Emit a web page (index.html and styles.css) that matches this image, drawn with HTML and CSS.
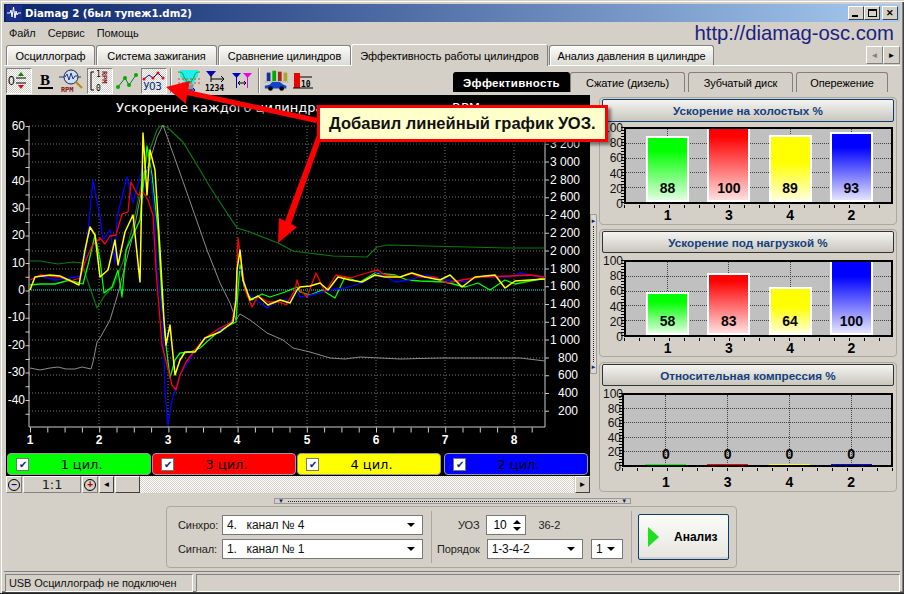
FILE: index.html
```html
<!DOCTYPE html>
<html lang="ru">
<head>
<meta charset="utf-8">
<title>Diamag 2</title>
<link rel="stylesheet" href="styles.css">
</head>
<body>
<div class="window">
  <header class="titlebar">
    <svg class="app-icon" width="16" height="16" viewBox="0 0 16 16"><rect width="16" height="16" fill="#1a2f8a"/><path d="M1 8h3l1-3 1 7 1.500-10 1.500 11 1-7 1 4 1-2h3" fill="none" stroke="#fff"/></svg>
    <span class="title-text">Diamag 2 (был тупеж1.dm2)</span>
    <span class="caption-buttons">
      <span class="cap-btn"><i class="cap-min"></i></span>
      <span class="cap-btn"><i class="cap-max"></i></span>
      <span class="cap-btn cap-close">✕</span>
    </span>
  </header>
  <div class="menubar">
    <nav class="menu"><span>Файл</span><span>Сервис</span><span>Помощь</span></nav>
    <span class="url">http://diamag-osc.com</span>
  </div>
  <div class="tabs">
    <span class="tab t1">Осциллограф</span>
    <span class="tab t2">Система зажигания</span>
    <span class="tab t3">Сравнение цилиндров</span>
    <span class="tab active t4">Эффективность работы цилиндров</span>
    <span class="tab t5">Анализ давления в цилиндре</span>
    <span class="tab-arrows"><span class="tab-arrow dim">◄</span><span class="tab-arrow">►</span></span>
  </div>
  <div class="toolstrip">
    <div class="toolbar">
      <span class="tool pressed"><svg width="22" height="20" viewBox="0 0 22 20"><text x="0" y="14" class="ic-t">0</text><path d="M8 7h10M8 12h10" stroke="#000"/><path d="M13 1l3 4h-6z" fill="#080"/><path d="M13 18l3-4h-6z" fill="#e00"/></svg></span>
      <span class="tool t-b"><svg width="22" height="20" viewBox="0 0 22 20"><text x="5" y="14" class="ic-b">B</text><path d="M3 17h15" stroke="#000" stroke-width="2"/></svg></span>
      <span class="tool t-s"><svg width="26" height="24" viewBox="0 0 26 24"><circle cx="12" cy="8" r="7" fill="#cfe0f5" stroke="#223" /><path d="M6 8l2-3 2 6 2-7 2 6 2-3h2M0 8h5M19 8h3" fill="none" stroke="#238"/><path d="M17 13l6 6" stroke="#b80" stroke-width="2"/><text x="2" y="23" class="ic-rpm">RPM</text></svg></span>
      <span class="sep-s"></span>
      <span class="tool pressed t-r"><svg width="22" height="24" viewBox="0 0 22 24"><path d="M5 3h-3v18h3" fill="none" stroke="#000"/><text x="7" y="8" class="ic-s">1</text><text x="7" y="22" class="ic-s">0</text><text class="ic-rpm" transform="rotate(90 13 2)" x="13" y="2">RPM</text></svg></span>
      <span class="tool t-l"><svg width="24" height="20" viewBox="0 0 24 20"><path d="M3 16l7-9 4 7 7-10" fill="none" stroke="#173"/><g fill="#0a0"><circle cx="3" cy="16" r="2"/><circle cx="10" cy="7" r="2"/><circle cx="14" cy="14" r="2"/><circle cx="21" cy="4" r="2"/></g></svg></span>
      <span class="tool pressed t-u"><svg width="24" height="22" viewBox="0 0 24 22"><path d="M2 9l5-4 4 3 5-5 5 5" fill="none" stroke="#00a"/><g fill="#e00"><circle cx="2" cy="9" r="1.500"/><circle cx="11" cy="8" r="1.500"/><circle cx="16" cy="3" r="1.500"/><circle cx="21" cy="8" r="1.500"/></g><text x="1" y="20" class="ic-u">УОЗ</text></svg></span>
      <span class="sep"></span>
      <span class="tool t-a"><svg width="24" height="24" viewBox="0 0 24 24"><path d="M3 1h18v6l-6 9h-6l-6-9z" fill="#2ee"/><path d="M1 3c4 0 5 1 6 5l3 5h4l3-5c1-4 2-5 6-5" fill="none" stroke="#0a0"/><path d="M1 10h22M1 14h22" stroke="#e33" stroke-dasharray="2 2"/><path d="M6 21h12M6 21l2-2M6 21l2 2M18 21l-2-2M18 21l-2 2" stroke="#00a" fill="none"/></svg></span>
      <span class="tool t-n"><svg width="26" height="24" viewBox="0 0 26 24"><path d="M4 2h10l-5 6z" fill="#00c"/><path d="M9 4v9M9 10h13M22 10l-3-3M22 10l-3 3" stroke="#000" fill="none"/><text x="3" y="22" class="ic-n">1234</text></svg></span>
      <span class="tool t-m"><svg width="24" height="22" viewBox="0 0 24 22"><path d="M2 3h9l-4.500 5z" fill="#00c"/><path d="M13 3h9l-4.500 5z" fill="#e0e"/><path d="M6.500 5v13" stroke="#00c"/><path d="M17.500 5v13" stroke="#e0e"/><path d="M8 13h8M8 13l2-2M8 13l2 2M16 13l-2-2M16 13l-2 2" stroke="#000" fill="none"/></svg></span>
      <span class="sep sep2"></span>
      <span class="tool t-c"><svg width="28" height="24" viewBox="0 0 30 24"><rect x="4" y="3" width="4" height="9" fill="#139"/><rect x="10" y="1" width="4" height="11" fill="#0a0"/><rect x="16" y="2" width="4" height="10" fill="#a22"/><rect x="22" y="3" width="4" height="9" fill="#aa2"/><path d="M2 13h26" stroke="#888" stroke-dasharray="1 1"/><path d="M2 20v-3l5-1 3-3h8l4 3 3 1v3z" fill="#14c"/><circle cx="8" cy="20" r="2.500"/><circle cx="20" cy="20" r="2.500"/></svg></span>
      <span class="tool t-d"><svg width="24" height="22" viewBox="0 0 24 22"><rect x="3" y="3" width="6" height="15" fill="#e00"/><path d="M9 7h12" stroke="#000"/><text x="10" y="17" class="ic-n">10</text><path d="M2 18h20" stroke="#000"/></svg></span>
    </div>
    <div class="subtabs">
      <span class="subtab on s1">Эффективность</span>
      <span class="subtab s2">Сжатие (дизель)</span>
      <span class="subtab s3">Зубчатый диск</span>
      <span class="subtab s4">Опережение</span>
    </div>
  </div>

  <div class="main">
    <section class="scope">
      <svg class="scope-chart" width="584" height="358" viewBox="6 95 584 358">
        <rect x="6" y="95" width="584" height="358" fill="#000"/>
        <g class="grid">
          <path d="M29 126H545M29 144H545M29 162H545M29 180H545M29 197H545M29 215H545M29 233H545M29 251H545M29 269H545M29 304H545M29 322H545M29 340H545M29 358H545M29 375H545M29 393H545M29 411H545"/>
          <path d="M99 126V427M168 126V427M237 126V427M307 126V427M376 126V427M445 126V427M514 126V427"/>
        </g>
        <path class="axis" d="M29 126V427H545V126"/>
        <line class="ticks" x1="30" y1="430" x2="545" y2="430" stroke-dasharray="1 16.300"/>
        <line class="ticks-v" x1="27.500" y1="126" x2="27.500" y2="427" stroke-dasharray="1 12.700"/>
        <line class="ticks-v" x1="547" y1="126" x2="547" y2="427" stroke-dasharray="1 16.800"/>
        <line class="zero" x1="29" y1="290" x2="545" y2="290"/>
        <polyline class="c-dg" points="30,261 40,261 58,264 73,262 82,263 90,288 97,308 105,295 113,287 123,262 133,225 147,157 157,130 160,126 167,127 183,142 200,170 210,187 237,228 250,232 278,243 293,251 300,252 333,256 367,257 377,247 387,245 467,247 507,248 545,248"/>
        <polyline class="c-gr" points="30,368 40,370 50,368 58,367 66,369 75,369 82,367 91,369 93,362 97,342 100,338 110,320 117,297 125,266 133,235 143,183 157,137 163,125 170,145 180,173 193,210 207,250 220,283 230,303 236,320 240,314 250,320 258,326 267,333 283,340 293,348 310,352 330,358 345,359 360,357 400,359 440,358 480,358 520,358 545,361"/>
        <polyline class="c-g" points="30,285 40,284 55,284 70,280 83,284 88,265 95,235 100,260 104,293 112,287 118,270 122,297 126,250 133,235 140,220 147,146 152,175 158,230 162,300 166,345 170,378 175,360 180,353 190,352 200,348 220,330 236,322 238,290 240,265 245,290 252,300 262,294 270,297 285,292 297,287 300,292 310,295 322,290 335,298 345,277 360,282 375,273 395,275 407,280 420,281 445,282 465,287 478,283 490,290 505,280 515,284 545,278"/>
        <polyline class="c-b" points="30,280 40,276 55,280 70,278 80,276 85,262 93,180 100,217 103,240 110,230 115,263 117,217 127,177 133,203 140,177 142,170 150,168 155,220 157,270 163,320 165,393 168,425 172,400 180,375 185,367 200,343 217,332 233,320 235,300 238,270 242,270 247,293 267,308 280,300 290,300 297,290 300,297 308,296 330,290 345,288 365,282 378,272 395,282 410,280 425,275 445,280 465,282 478,277 495,277 510,277 520,273 545,278"/>
        <polyline class="c-r" points="30,280 40,275 50,276 60,277 70,281 80,278 85,262 92,246 100,238 105,244 110,236 116,235 122,214 128,212 131,182 135,190 138,195 143,192 148,200 153,215 156,270 160,320 162,345 167,365 172,385 176,390 180,375 186,362 195,350 205,338 220,328 232,322 236,300 238,238 241,260 245,290 252,307 258,296 268,302 280,302 286,305 295,290 297,280 300,290 307,297 316,273 325,292 336,275 350,278 360,275 370,272 378,270 385,275 400,277 410,273 420,277 435,277 447,283 462,280 480,277 510,276 530,275 545,277"/>
        <polyline class="c-y" points="30,290 35,277 50,275 60,276 75,283 79,285 85,250 90,227 95,235 100,277 108,270 115,240 118,265 125,232 133,215 140,282 143,133 147,195 150,150 155,170 160,250 164,320 166,345 170,325 175,375 180,360 185,352 195,352 205,338 220,332 233,322 236,300 237,270 240,250 243,280 250,300 258,296 268,305 280,300 290,303 297,290 300,287 310,286 320,283 328,290 338,277 350,280 362,282 375,275 385,277 400,277 412,273 425,277 440,280 450,275 462,287 475,277 495,275 505,288 515,281 545,279"/>
        <text class="sc-title" x="116" y="112">Ускорение каждого цилиндра</text>
        <text class="sc-title" x="452" y="112">RPM</text>
        <g class="sc-l" text-anchor="end">
          <text x="25" y="130">60</text><text x="25" y="157">50</text><text x="25" y="185">40</text><text x="25" y="212">30</text><text x="25" y="239">20</text><text x="25" y="267">10</text><text x="25" y="294">0</text><text x="25" y="321">-10</text><text x="25" y="349">-20</text><text x="25" y="376">-30</text><text x="25" y="404">-40</text>
        </g>
        <g class="sc-l">
          <text x="550" y="148">3 200</text><text x="550" y="166">3 000</text><text x="550" y="184">2 800</text><text x="550" y="201">2 600</text><text x="550" y="219">2 400</text><text x="550" y="237">2 200</text><text x="550" y="255">2 000</text><text x="550" y="273">1 800</text><text x="550" y="290">1 600</text><text x="550" y="308">1 400</text><text x="550" y="326">1 200</text><text x="550" y="344">1 000</text><text x="558" y="362">800</text><text x="558" y="379">600</text><text x="558" y="397">400</text><text x="558" y="415">200</text>
        </g>
        <g class="sc-x" text-anchor="middle">
          <text x="30" y="444">1</text><text x="99" y="444">2</text><text x="168" y="444">3</text><text x="237" y="444">4</text><text x="307" y="444">5</text><text x="376" y="444">6</text><text x="445" y="444">7</text><text x="514" y="444">8</text>
        </g>
      </svg>
      <div class="cyls">
        <label class="cyl green"><span class="check">✔</span><span class="cyl-name">1 цил.</span></label>
        <label class="cyl red"><span class="check">✔</span><span class="cyl-name">3 цил.</span></label>
        <label class="cyl yellow"><span class="check">✔</span><span class="cyl-name">4 цил.</span></label>
        <label class="cyl blue"><span class="check">✔</span><span class="cyl-name">2 цил.</span></label>
      </div>
      <div class="scrollrow">
        <span class="zoom-btn"><i class="zm">–</i></span>
        <span class="scale">1:1</span>
        <span class="zoom-btn"><i class="zm zr">+</i></span>
        <span class="sb-btn">◄</span>
        <span class="sb-thumb"></span>
        <span class="sb-track"></span>
        <span class="sb-btn">►</span>
      </div>
    </section>

    <div class="vsplit"><span class="sp-arrow">►</span><span class="sp-dots"></span><span class="sp-arrow">►</span></div>

    <aside class="groups">
      <section class="group g1">
        <div class="group-head focus">Ускорение на холостых %</div>
        <div class="bar-chart">
          <div class="y-labels"><span>100</span><span>80</span><span>60</span><span>40</span><span>20</span><span>0</span></div>
          <div class="bar-main">
            <div class="plot">
              <div class="gl gl-h"><i></i><i></i><i></i><i></i></div>
              <div class="gl gl-v"><i></i><i></i><i></i><i></i></div>
              <div class="bars">
                <div class="slot"><div class="bar green" style="height:88%"></div><b>88</b></div>
                <div class="slot"><div class="bar red" style="height:100%"></div><b>100</b></div>
                <div class="slot"><div class="bar yellow" style="height:89%"></div><b>89</b></div>
                <div class="slot"><div class="bar blue" style="height:93%"></div><b>93</b></div>
              </div>
            </div>
            <div class="cats"><span>1</span><span>3</span><span>4</span><span>2</span></div>
          </div>
        </div>
      </section>
      <section class="group g2">
        <div class="group-head">Ускорение под нагрузкой %</div>
        <div class="bar-chart">
          <div class="y-labels"><span>100</span><span>80</span><span>60</span><span>40</span><span>20</span><span>0</span></div>
          <div class="bar-main">
            <div class="plot">
              <div class="gl gl-h"><i></i><i></i><i></i><i></i></div>
              <div class="gl gl-v"><i></i><i></i><i></i><i></i></div>
              <div class="bars">
                <div class="slot"><div class="bar green" style="height:58%"></div><b>58</b></div>
                <div class="slot"><div class="bar red" style="height:83%"></div><b>83</b></div>
                <div class="slot"><div class="bar yellow" style="height:64%"></div><b>64</b></div>
                <div class="slot"><div class="bar blue" style="height:100%"></div><b>100</b></div>
              </div>
            </div>
            <div class="cats"><span>1</span><span>3</span><span>4</span><span>2</span></div>
          </div>
        </div>
      </section>
      <section class="group g3">
        <div class="group-head">Относительная компрессия %</div>
        <div class="bar-chart wide">
          <div class="y-labels"><span>100</span><span>80</span><span>60</span><span>40</span><span>20</span><span>0</span></div>
          <div class="bar-main">
            <div class="plot">
              <div class="gl gl-h"><i></i><i></i><i></i><i></i></div>
              <div class="gl gl-v"><i></i><i></i><i></i><i></i></div>
              <div class="bars">
                <div class="slot"><div class="line green"></div><b>0</b></div>
                <div class="slot"><div class="line red"></div><b>0</b></div>
                <div class="slot"><div class="line yellow"></div><b>0</b></div>
                <div class="slot"><div class="line blue"></div><b>0</b></div>
              </div>
            </div>
            <div class="cats"><span>1</span><span>3</span><span>4</span><span>2</span></div>
          </div>
        </div>
      </section>
    </aside>
  </div>

  <div class="hsplit"><span class="sp-arrow">▼</span><span class="sp-dots-h"></span><span class="sp-arrow">▼</span></div>

  <div class="bottom">
    <div class="controls">
      <div class="ctl-col c1">
        <div class="row"><span class="lbl">Синхро:</span><span class="combo w201"><span>4.&nbsp;&nbsp; канал № 4</span><i class="dd"></i></span></div>
        <div class="row"><span class="lbl">Сигнал:</span><span class="combo w201"><span>1.&nbsp;&nbsp; канал № 1</span><i class="dd"></i></span></div>
      </div>
      <span class="vline"></span>
      <div class="ctl-col c2">
        <div class="row r-uoz"><span class="lbl">УОЗ</span><span class="spin"><span>10</span><span class="spin-arrows"><i class="up"></i><i class="down"></i></span></span><span class="lbl teeth">36-2</span></div>
        <div class="row"><span class="lbl">Порядок</span><span class="combo w97"><span>1-3-4-2</span><i class="dd"></i></span><span class="combo w32"><span>1</span><i class="dd"></i></span></div>
      </div>
      <span class="vline"></span>
      <button class="run"><i class="play"></i><span>Анализ</span></button>
    </div>
  </div>

  <footer class="status">
    <span class="st-panel st1">USB Осциллограф не подключен</span>
    <span class="st-panel st2"></span>
  </footer>

  <svg class="arrows" width="904" height="594" viewBox="0 0 904 594">
    <path class="arrow-shadow" d="M170 91L194 84L192 93L322 122L320 127L190 99L190 107Z"/>
    <path class="arrow" d="M166 87L190 81L188 90L318 118L316 123L187 95L186 104Z"/>
    <path class="arrow" d="M278 243L279 218L285 221L317 135L322 137L291 224L297 227Z"/>
  </svg>
  <div class="note">Добавил линейный график УОЗ.</div>
</div>
</body>
</html>
```
FILE: styles.css
```css
* { box-sizing: border-box; }
html, body { margin: 0; padding: 0; }
body { width: 904px; height: 594px; overflow: hidden; background: #d4d0c8; font: 11px "Liberation Sans", Arial, sans-serif; letter-spacing: -.1px; color: #000; }
i { font-style: normal; }

.window { position: relative; width: 904px; height: 594px; padding: 4px 4px 0; background: #d4d0c8; display: flex; flex-direction: column; box-shadow: inset 1px 1px 0 #d4d0c8, inset 2px 2px 0 #fff, inset -1px -1px 0 #404040, inset -2px -2px 0 #808080; border-bottom: 1px solid #222; }

/* title */
.titlebar { height: 18px; flex: none; display: flex; align-items: center; background: linear-gradient(90deg, #0a246a, #a6caf0); padding: 0 2px; }
.app-icon { flex: none; }
.title-text { margin-left: 3px; color: #fff; letter-spacing: 0; font: bold 10.200px "DejaVu Sans", sans-serif; }
.caption-buttons { margin-left: auto; display: flex; }
.cap-btn { width: 16px; height: 14px; background: #d4d0c8; border: 1px solid; border-color: #fff #404040 #404040 #fff; display: flex; align-items: center; justify-content: center; font-size: 9px; font-weight: bold; position: relative; }
.cap-min { width: 6px; height: 2px; background: #000; margin-top: 6px; margin-right: 2px; }
.cap-max { width: 9px; height: 8px; border: 1px solid #000; border-top-width: 2px; }
.cap-close { margin-left: 2px; }

/* menu */
.menubar { height: 22px; flex: none; display: flex; justify-content: space-between; align-items: center; padding: 0 4px 0 5px; }
.menu { display: flex; gap: 12px; color: #111; }
.url { font: 20.300px "Liberation Sans", sans-serif; letter-spacing: 0; color: #1b2280; margin-top: 1px; margin-right: 2px; }

/* tabs */
.tabs { height: 22px; flex: none; display: flex; align-items: flex-end; padding-left: 2px; border-bottom: 1px solid #fff; position: relative; }
.tab { height: 20px; margin-right: 1px; display: flex; align-items: center; justify-content: center; border: 1px solid #808080; border-bottom: 0; border-radius: 3px 3px 0 0; background: linear-gradient(#fbfbf9, #dcdad4); box-shadow: inset 1px 1px 0 #fff; }
.t1 { width: 89px; } .t2 { width: 121px; } .t3 { width: 133px; margin-right: 0; }
.t4 { width: 197px; }
.t5 { width: 165px; }
.tab.active { height: 22px; background: #d4d0c8; margin-bottom: -1px; border-color: #fff #808080 #d4d0c8 #fff; box-shadow: none; }
.tab-arrows { position: absolute; right: 0; top: 2px; display: flex; }
.tab-arrow { width: 17px; height: 18px; font-size: 8px; display: flex; align-items: center; justify-content: center; background: #d4d0c8; border: 1px solid; border-color: #fff #808080 #808080 #fff; }
.tab-arrow.dim { color: #808080; }

/* toolstrip */
.toolstrip { height: 29px; flex: none; display: flex; align-items: flex-start; justify-content: space-between; }
.toolbar { display: flex; align-items: center; height: 27px; padding-left: 2px; margin-top: 1px; }
.tool { height: 26px; width: 26px; display: flex; align-items: center; justify-content: center; flex: none; }
.pressed { background: repeating-conic-gradient(#fff 0 25%, #d4d0c8 0 50%) 0 0 / 2px 2px; border: 1px solid; border-color: #808080 #fff #fff #808080; }
.t-b { width: 27px; } .t-s { width: 26px; }
.sep-s { width: 2px; }
.t-r { width: 26px; } .t-l { width: 28px; } .t-u { width: 26px; }
.sep { width: 2px; height: 25px; margin: 0 5px 0 3px; border-left: 1px solid #808080; border-right: 1px solid #fff; }
.t-a { width: 24px; } .t-n { width: 28px; } .t-m { width: 26px; }
.sep2 { margin: 0 3px; }
.t-c { width: 28px; } .t-d { width: 24px; }
.ic-t { font: 12px "Liberation Sans", sans-serif; }
.ic-b { font: bold 15px "Liberation Serif", serif; }
.ic-rpm { font: bold 7px "DejaVu Sans Mono", monospace; fill: #8a1010; }
.ic-s { font: 8px "DejaVu Sans Mono", monospace; }
.ic-u { font: 11px "DejaVu Sans Mono", monospace; letter-spacing: -.5px; fill: #00308a; }
.ic-n { font: bold 8px "DejaVu Sans Mono", monospace; }

.subtabs { display: flex; align-items: flex-end; height: 27px; padding-right: 12px; margin-top: -1px; }
.subtab { height: 20px; display: flex; align-items: center; justify-content: center; border: 1px solid #808080; border-bottom: 0; border-radius: 3px 3px 0 0; background: #d4d0c8; }
.s1 { width: 117px; } .s2 { width: 115px; } .s3 { width: 105px; margin-left: 3px; } .s4 { width: 92px; margin-left: 3px; }
.subtab.on { background: #000; color: #fff; font-size: 11.500px; font-weight: bold; letter-spacing: .3px; border-color: #000; }

/* main */
.main { flex: none; height: 399px; display: flex; padding-left: 2px; }
.scope { width: 584px; flex: none; display: flex; flex-direction: column; }
.scope-chart { display: block; flex: none; }
.grid path { fill: none; stroke: #777; stroke-dasharray: 1 2; }
.axis { fill: none; stroke: #ccc; }
.ticks { stroke: #ccc; stroke-width: 5; }
.ticks-v { stroke: #ccc; stroke-width: 4; }
.zero { stroke: #0ff; stroke-dasharray: 1 1; }
polyline { fill: none; stroke-width: 1.300; stroke-linejoin: round; }
.c-dg { stroke: #0a7a0a; stroke-width: 1.200; }
.c-gr { stroke: #8c8c8c; stroke-width: 1; }
.c-g { stroke: #0f0; }
.c-b { stroke: #00f; }
.c-r { stroke: #f00; }
.c-y { stroke: #ff0; stroke-width: 1.500; }
.sc-title { font: 13px "DejaVu Sans", sans-serif; letter-spacing: 0; fill: #fff; }
.sc-l text { font: 12px "Liberation Sans", sans-serif; letter-spacing: 0; fill: #fff; }
.sc-x text { font: bold 12px "Liberation Sans", sans-serif; fill: #fff; }

.cyls { display: flex; flex: none; height: 23px; background: #000; padding: 0 3px 1px 1px; gap: 1px; }
.cyl { width: 144px; flex: none; display: flex; align-items: center; border: 1px solid #999; border-radius: 4px; padding-left: 8px; }
.cyl-name { flex: 1; text-align: center; font: 13px "DejaVu Sans", sans-serif; letter-spacing: 0; padding-right: 16px; }
.cyl.green { background: #0f0; } .cyl.red { background: #f00; } .cyl.yellow { background: #ff0; } .cyl.blue { background: #00f; margin-left: 2px; }
.check { width: 13px; height: 13px; background: #fff; border: 1px solid #777; color: #0a246a; font-size: 10px; line-height: 11px; text-align: center; flex: none; }

.scrollrow { display: flex; height: 17px; flex: none; align-items: stretch; }
.zoom-btn { width: 16px; flex: none; display: flex; align-items: center; justify-content: center; background: #d4d0c8; border: 1px solid; border-color: #fff #808080 #808080 #fff; }
.zm { width: 12px; height: 12px; border: 1px solid #000; border-radius: 50%; display: flex; align-items: center; justify-content: center; font: bold 10px/1 "Liberation Sans", sans-serif; color: #008; }
.zr { color: #a00; }
.scale { width: 58px; margin: 0 1px; text-align: center; font: 13px/16px "DejaVu Sans", sans-serif; background: #d4d0c8; border: 1px solid; border-color: #fff #808080 #808080 #fff; color: #222; }
.sb-btn { width: 15px; margin-left: 1px; flex: none; font-size: 8px; display: flex; align-items: center; justify-content: center; background: #d4d0c8; border: 1px solid; border-color: #fff #404040 #404040 #fff; }
.sb-thumb { width: 25px; flex: none; margin-left: 1px; background: #d4d0c8; border: 1px solid; border-color: #fff #404040 #404040 #fff; }
.sb-track { flex: 1; background: repeating-conic-gradient(#fff 0 25%, #d4d0c8 0 50%) 0 0 / 2px 2px; }

.vsplit { width: 7px; height: 160px; margin-top: 119px; flex: none; border: 1px solid #999; border-radius: 1px; display: flex; flex-direction: column; align-items: center; justify-content: space-between; padding: 3px 0; font-size: 6px; color: #0a246a; line-height: 7px; background: #dcd8d0; }
.sp-dots { flex: 1; border-left: 1px dotted #223; margin: 2px 0; }
.sp-arrow { font-size: 6px; color: #0a246a; line-height: 6px; }

.groups { width: 298px; margin-left: 2px; flex: none; padding-top: 2px; display: flex; flex-direction: column; }
.group { border: 1px solid #aaa8a0; border-radius: 4px; padding: 1px 2px 0 2px; flex: none; }
.g1 { height: 128px; margin-bottom: 4px; }
.g2 { height: 128px; margin-bottom: 5px; }
.g3 { height: 130px; }
.group-head { height: 22px; text-align: center; font: bold 11.700px/21px "Liberation Sans", sans-serif; letter-spacing: 0; color: #14407c; border: 1px solid #333; border-radius: 2px; background: linear-gradient(#f5f4f1, #c9c6bd); }
.group-head.focus { border-color: #0a3d73; height: 23px; }
.bar-chart { display: flex; margin-top: 7px; padding-left: 2px; }
.g1 .bar-chart { margin-top: 5px; }
.y-labels { width: 20px; height: 89px; margin-top: -5px; flex: none; display: flex; flex-direction: column; justify-content: space-between; text-align: right; font: 12px/13px "Liberation Sans", sans-serif; letter-spacing: 0; color: #111; position: relative; left: -1px; }
.bar-main { width: 269px; flex: none; position: relative; }
.bar-main::before { content: ""; position: absolute; left: -3px; top: 0; height: 77px; width: 3px; background: repeating-linear-gradient(#000 0 1px, transparent 1px 3px); }
.plot { position: relative; height: 77px; background: #c0c0c0; border: 2px solid #000; overflow: hidden; }
.wide .y-labels { width: 18px; height: 86px; }
.wide .bar-main { width: 271px; }
.wide .bar-main::before { height: 74px; }
.wide .plot { height: 74px; }
.gl { position: absolute; inset: 0; }
.gl-h { display: flex; flex-direction: column; justify-content: space-evenly; }
.gl-h i { display: block; border-top: 1px dotted #444; }
.gl-v { display: grid; grid-template-columns: repeat(4, 1fr); padding: 0 9px 0 11px; }
.gl-v i { display: block; width: 1px; margin: auto; height: 100%; border-left: 1px dotted #444; }
.bars { position: absolute; inset: -2px 0 0; padding: 0 9px 0 11px; display: grid; grid-template-columns: repeat(4, 1fr); grid-template-rows: 100%; }
.slot { position: relative; display: flex; align-items: flex-end; justify-content: center; }
.slot b { position: absolute; left: 0; right: 0; bottom: 6px; text-align: center; font: bold 14px/16px "Liberation Sans", sans-serif; letter-spacing: 0; color: #050505; }
.wide .slot b { bottom: 3px; }
.bar { width: 43px; border: 2px solid #fff; }
.bar.green { background: linear-gradient(#0f0 20%, #e0ffe0); }
.bar.red { background: linear-gradient(#f00 10%, #ffe0e0); }
.bar.yellow { background: linear-gradient(#ff0 40%, #ffffd8); }
.bar.blue { background: linear-gradient(#00f 20%, #e4e4ff); }
.line { width: 41px; height: 1px; }
.line.green { background: #0f0; } .line.red { background: #f00; } .line.yellow { background: #ff0; } .line.blue { background: #00f; }
.cats { margin-top: 1px; padding: 2px 11px 0 13px; display: grid; grid-template-columns: repeat(4, 1fr); text-align: center; font: bold 14px/16px "Liberation Sans", sans-serif; letter-spacing: 0; background: repeating-linear-gradient(90deg, #000 0 1px, transparent 1px 15px) 0 0 / 100% 3px no-repeat; }
.wide .cats { padding-top: 6px; }

/* splitter */
.hsplit { height: 6px; width: 357px; flex: none; margin: 4px 0 0 270px; border: 1px solid #999; display: flex; align-items: center; justify-content: space-between; padding: 0 3px; font-size: 6px; color: #0a246a; }
.hsplit .sp-arrow { line-height: 4px; }
.sp-dots-h { flex: 1; border-top: 1px dotted #223; margin: 0 4px; }

/* controls */
.bottom { height: 68px; flex: none; padding: 2px 0 0 162px; border-bottom: 1px solid #808080; }
.controls { width: 571px; height: 62px; border: 1px solid #a9a79f; border-radius: 4px; display: flex; align-items: center; padding: 0 7px 0 11px; }
.ctl-col { display: flex; flex-direction: column; gap: 4px; flex: none; }
.row { display: flex; align-items: center; height: 20px; }
.c1 .lbl { width: 44px; }
.lbl { color: #222; }
.combo { height: 20px; background: #fff; border: 1px solid #777; display: flex; align-items: center; justify-content: space-between; padding: 0 7px 0 4px; font-size: 12px; color: #111; }
.w201 { width: 201px; }
.w97 { width: 97px; margin-left: 7px; }
.w32 { width: 32px; margin-left: 8px; }
.dd { width: 0; height: 0; border: 4px solid transparent; border-top: 4px solid #000; border-bottom: 0; }
.vline { width: 1px; height: 52px; background: #a9a79f; margin: 0 5px 0 8px; flex: none; }
.r-uoz { padding-left: 21px; }
.spin { width: 40px; height: 20px; margin-left: 6px; background: #fff; border: 1px solid #777; display: flex; align-items: center; justify-content: space-between; padding: 0 4px 0 7px; font-size: 12px; }
.spin-arrows { display: flex; flex-direction: column; gap: 3px; }
.up { display: block; border: 4px solid transparent; border-bottom: 4px solid #000; border-top: 0; }
.down { display: block; border: 4px solid transparent; border-top: 4px solid #000; border-bottom: 0; }
.teeth { margin-left: 13px; }
.c2 { width: 186px; }
.run { width: 91px; height: 46px; margin-left: 1px; border: 1px solid #0a3d73; border-radius: 2px; background: linear-gradient(#fbfbf9, #e6e5e0); display: flex; align-items: center; padding: 0 0 0 9px; font: bold 12px "Liberation Sans", sans-serif; box-shadow: inset 0 -2px 0 #d0cec6; }
.play { border-left: 11px solid #1fe01f; border-top: 10px solid transparent; border-bottom: 10px solid transparent; margin-right: 15px; }

/* status */
.status { height: 18px; flex: none; display: flex; gap: 3px; margin: 2px 0 0 1px; }
.st-panel { border: 1px solid; border-color: #808080 #fff #fff #808080; display: flex; align-items: center; padding-left: 3px; }
.st1 { width: 188px; color: #111; }
.st2 { flex: 1; }

/* callout */
.note { position: absolute; left: 317px; top: 105px; width: 291px; height: 37px; border: 3px solid #f00; background: #ffc; font: bold 16.500px/31px "Liberation Sans", sans-serif; letter-spacing: 0; padding-left: 9px; color: #111; box-shadow: 3px 3px 3px rgba(0,0,0,.45); white-space: nowrap; }
.arrows { position: absolute; left: 0; top: 0; pointer-events: none; }
.arrow { fill: #f00; }
.arrow-shadow { fill: rgba(0,0,0,.3); }
```
